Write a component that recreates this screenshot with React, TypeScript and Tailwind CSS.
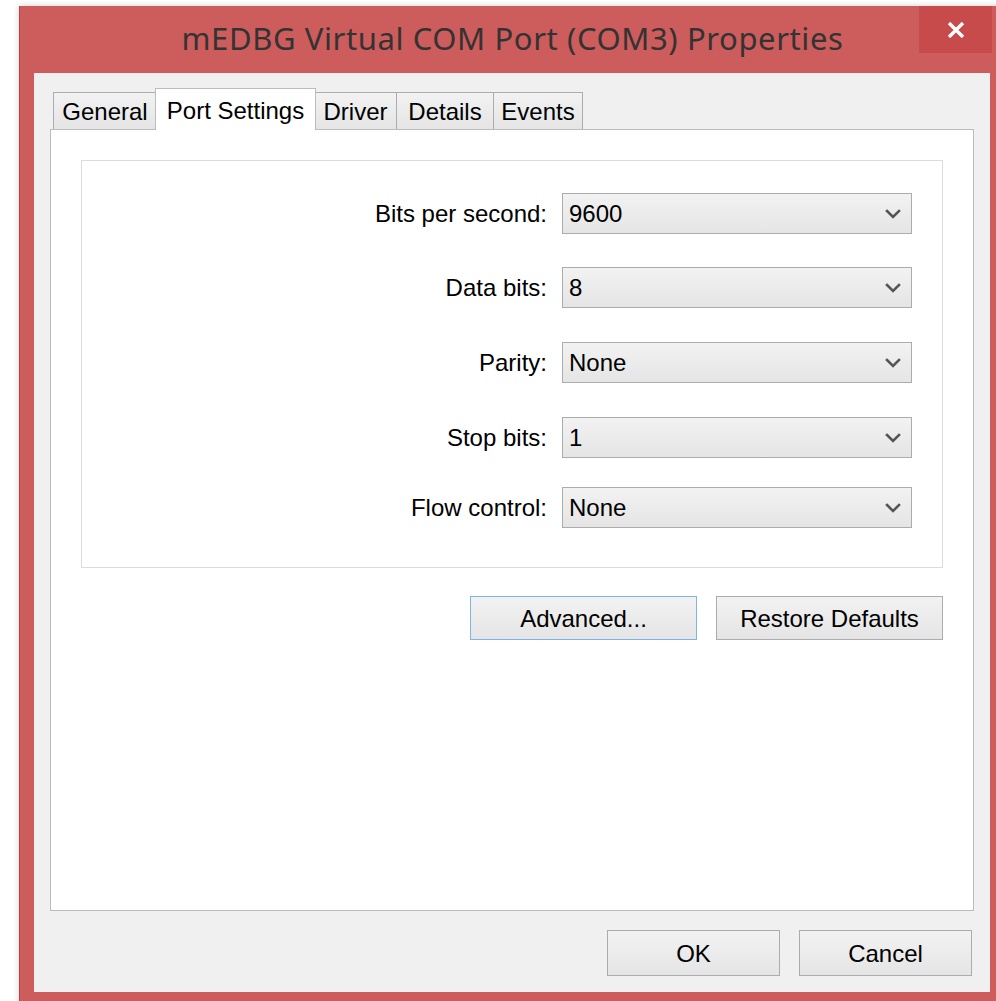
import { ReactNode } from "react";

type Field = {
  label: string;
  value: string;
  gap: string;
};

const fields: Field[] = [
  { label: "Bits per second:", value: "9600", gap: "mt-[32px]" },
  { label: "Data bits:", value: "8", gap: "mt-[33px]" },
  { label: "Parity:", value: "None", gap: "mt-[34px]" },
  { label: "Stop bits:", value: "1", gap: "mt-[34px]" },
  { label: "Flow control:", value: "None", gap: "mt-[29px]" },
];

const tabs = [
  { name: "General", width: "w-[104px]" },
  { name: "Port Settings", width: "w-[161px]", active: true },
  { name: "Driver", width: "w-[83px]" },
  { name: "Details", width: "w-[98px]" },
  { name: "Events", width: "w-[90px]" },
];

function Chevron() {
  return (
    <svg width="16" height="10" viewBox="0 0 16 10" className="shrink-0">
      <path d="M2 2 L8 8 L14 2" fill="none" stroke="#555" strokeWidth="2.6" strokeLinecap="square" />
    </svg>
  );
}

function Combo({ value }: { value: string }) {
  return (
    <div className="w-[350px] h-[41px] flex items-center justify-between pl-[6px] pr-[10px] border border-[#acacac] bg-gradient-to-b from-[#f2f2f2] to-[#e5e5e5]">
      <span>{value}</span>
      <Chevron />
    </div>
  );
}

function Button({ children, className = "", focused = false }: { children: ReactNode; className?: string; focused?: boolean }) {
  return (
    <button
      className={
        "flex items-center justify-center pt-[2px] border bg-gradient-to-b from-[#f2f2f2] to-[#e5e5e5] " +
        (focused ? "border-[#7eb4ea] " : "border-[#acacac] ") +
        className
      }
    >
      {children}
    </button>
  );
}

export default function App() {
  return (
    <div className="w-[996px] h-[1001px] overflow-hidden bg-white font-['Liberation_Sans',Arial,sans-serif] text-[24px] text-black">
      <div className="ml-[19px] mt-[6px] w-[986px] h-[1010px] bg-[#cd5c5c] border-l border-[#b04646] shadow-[0_0_6px_rgba(0,0,0,0.2)]">
        {/* title bar */}
        <div className="relative h-[67px] flex items-center justify-center">
          <span className="font-['Noto_Sans',sans-serif] text-[31px] tracking-[0.6px] text-[#333] pb-[2px]">
            mEDBG Virtual COM Port (COM3) Properties
          </span>
          <div className="absolute right-[13px] top-0 w-[73px] h-[47px] bg-[#c84b4b] flex items-center justify-center">
            <svg width="18" height="16" viewBox="0 0 18 16">
              <path d="M2 1 L16 15 M16 1 L2 15" stroke="white" strokeWidth="3.4" />
            </svg>
          </div>
        </div>

        {/* client area */}
        <div className="ml-[14px] w-[956px] h-[919px] bg-[#f0f0f0] px-[16px] flex flex-col">
          <div className="h-[56px] flex items-end pl-[3px]">
            {tabs.map((t) =>
              t.active ? (
                <div
                  key={t.name}
                  className={t.width + " relative z-10 -ml-[2px] -mr-px h-[42px] -mb-px bg-white border border-b-0 border-[#bcbcbc] flex items-start justify-center pt-[4px]"}
                >
                  {t.name}
                </div>
              ) : (
                <div
                  key={t.name}
                  className={t.width + " h-[37px] -ml-px first:ml-0 border border-b-0 border-[#acacac] bg-gradient-to-b from-[#f2f2f2] to-[#e5e5e5] flex items-center justify-center pt-[2px]"}
                >
                  {t.name}
                </div>
              )
            )}
          </div>

          <div className="h-[782px] bg-white border border-[#bcbcbc] px-[30px] pt-[30px] flex flex-col">
            <div className="h-[408px] border border-[#dcdcdc] flex flex-col">
              {fields.map((f) => (
                <div key={f.label} className={f.gap + " flex items-center justify-end pr-[30px]"}>
                  <span className="mr-[15px]">{f.label}</span>
                  <Combo value={f.value} />
                </div>
              ))}
            </div>
            <div className="mt-[28px] flex justify-end gap-[19px]">
              <Button focused className="w-[227px] h-[44px]">Advanced...</Button>
              <Button className="w-[227px] h-[44px]">Restore Defaults</Button>
            </div>
          </div>

          <div className="mt-[19px] flex justify-end gap-[19px] pr-[2px]">
            <Button className="w-[173px] h-[46px]">OK</Button>
            <Button className="w-[173px] h-[46px]">Cancel</Button>
          </div>
        </div>
      </div>
    </div>
  );
}
